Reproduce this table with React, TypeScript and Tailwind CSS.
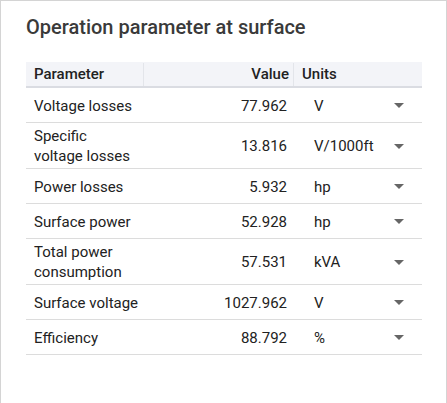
const rows = [
  { name: ['Voltage losses'], value: '77.962', unit: 'V' },
  { name: ['Specific', 'voltage losses'], value: '13.816', unit: 'V/1000ft' },
  { name: ['Power losses'], value: '5.932', unit: 'hp' },
  { name: ['Surface power'], value: '52.928', unit: 'hp' },
  { name: ['Total power', 'consumption'], value: '57.531', unit: 'kVA' },
  { name: ['Surface voltage'], value: '1027.962', unit: 'V' },
  { name: ['Efficiency'], value: '88.792', unit: '%' },
]

function Caret() {
  return (
    <svg width="10" height="5" viewBox="0 0 10 5" className="shrink-0">
      <path d="M0 0 L10 0 L5 5 Z" fill="#666666" />
    </svg>
  )
}

export default function App() {
  return (
    <div className="h-[403px] w-[447px] overflow-hidden bg-white font-['Roboto',sans-serif]">
      <div className="h-[420px] border border-[#d4d4d4] px-[25px] pt-[14px]">
        {/* title */}
        <h1 className="text-[20px] leading-[24px] font-medium text-[#3a3a3a]">
          Operation parameter at surface
        </h1>

        {/* table */}
        <div className="mt-[23px] w-[396px] text-[15px] text-[#222222]">
          <div className="grid h-[26px] grid-cols-[118px_150px_128px] border-b-2 border-[#dadce2] bg-[#f3f4f8] font-medium">
            <div className="flex items-center border-r border-[#e3e5ea] pl-2 my-[1px]">Parameter</div>
            <div className="flex items-center justify-end border-r border-[#e3e5ea] pr-[4px] my-[1px]">Value</div>
            <div className="flex items-center pl-2">Units</div>
          </div>

          {rows.map((r) => (
            <div
              key={r.value}
              className="grid min-h-[35px] grid-cols-[118px_150px_128px] border-b border-[#dcdcdc] pt-[3px] pb-[2px] leading-[20px]"
            >
              <div className="flex flex-col justify-center pl-2">
                {r.name.map((l) => (
                  <span key={l}>{l}</span>
                ))}
              </div>
              <div className="flex items-center justify-end pr-[7px]">{r.value}</div>
              <div className="flex items-center justify-between pl-[20px] pr-[18px]">
                <span>{r.unit}</span>
                <Caret />
              </div>
            </div>
          ))}
        </div>
      </div>
    </div>
  )
}
